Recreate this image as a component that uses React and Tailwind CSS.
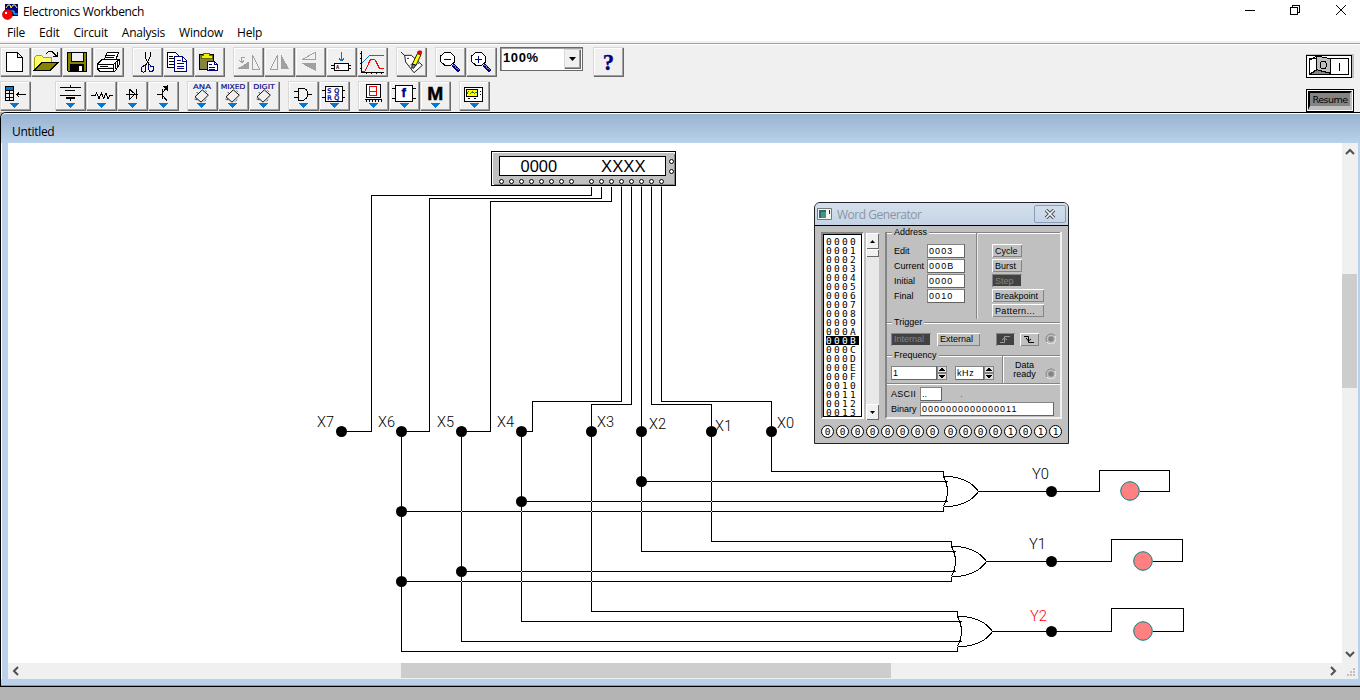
import React from "react";

const UI = "font-['Open_Sans','Noto_Sans',sans-serif]";
const NAVY = "#000084";
const BLUE = "#0078d7";

/* Toolbar button: the drawing grid is three units per pixel. */
function Btn({ x, y, arrow, children }) {
  return (
    <button className="block h-[30px] w-[31px] shrink-0 bg-[#f0f0f0] shadow-[inset_1px_1px_0_#d8d8d8,inset_-1px_-1px_0_#696969,inset_-2px_-2px_0_#a0a0a0,inset_2px_2px_0_#ffffff]">
      <svg width="31" height="30" viewBox={`${x} ${y} 93 90`} shapeRendering="crispEdges" fill="none" stroke="#000" strokeWidth="3">
        {children}
        {arrow && <path d={`M${x + arrow - 14} ${y + 66}h28l-14 15z`} fill={BLUE} stroke="none" />}
      </svg>
    </button>
  );
}

const Group = ({ children }) => <div className="flex">{children}</div>;

function Opamp({ x, label }) {
  const w = label === "ANA" ? 54 : label === "MIXED" ? 74 : 65;
  return (
    <Btn x={x} y={243} arrow={44}>
      <path d={`M${x + 46} 269.500l18 16l-22 21l-18 -16z`} shapeRendering="auto" strokeWidth="2.800" />
      <path d={`M${x + 29} 276l6 6M${x + 23} 297l9 3M${x + 56} 272l4 4M${x + 52} 304l6 -6`} strokeDasharray="3 2" shapeRendering="auto" />
      <text x={x + 18 + (54 - w) / 2} y="266" textLength={w} lengthAdjust="spacingAndGlyphs" fill={NAVY} stroke={NAVY} strokeWidth="0.400" fontFamily="DejaVu Sans" fontSize="20">{label}</text>
    </Btn>
  );
}

function TopRow() {
  return (
    <div className="flex h-[30px]">
      <div className="flex gap-2">
        <Group>
          <Btn x={0} y={141}>
            <path d="M19.500 157.500h33l15 15v42h-48zM52.500 157.500v15h15" fill="#fff" />
          </Btn>
          <Btn x={93} y={141}>
            <path d="M103 208v-36l6-6h15l6 6h24v15h-27z" fill="#ffff63" stroke="none" />
            <path d="M103.500 208v-36l5-5h16l6 6h24v14" stroke="#a5a500" />
            <path d="M103 210l22-22h48l-22 22z" fill="#848400" />
            <path d="M139 160l6-5h11l14 13M172 156v13h-13" />
          </Btn>
          <Btn x={186} y={141}>
            <path d="M202.500 157.500h57v57h-54l-3-4z" fill="#848400" />
            <path d="M213 158h36v27h-36z" fill="#f0f0f0" />
            <path d="M211 194h39v21h-39z" fill="#000" />
            <path d="M238 199h8v13h-8z" fill="#fff" stroke="none" />
          </Btn>
          <Btn x={279} y={141}>
            <path d="M313 180l9-24h34l-9 24z" fill="#fff" />
            <path d="M322 165h24M319 172h24" />
            <path d="M292 193l14-14h52v14l-13 21h-45l-8-8z" fill="#fff" />
            <path d="M292 193h48l18-14M340 193v21M346 187v21M352 183v18M292 206h48M300 200h24" />
            <path d="M325 201h10" stroke="#e7e700" />
          </Btn>
        </Group>
        <Group>
          <Btn x={396} y={141}>
            <path d="M435 157v14l13 24M450 157v14l-12 24" />
            <path d="M438 192l-7 6-6 3v13l6 3 6-4v-21M447 192l5 6h6l3 5v6l-5 5h-6l-4-5v-13" stroke={NAVY} />
          </Btn>
          <Btn x={489} y={141}>
            <path d="M502.500 157.500h24l9 9v36h-33z" fill="#fff" />
            <path d="M508 168h12M508 176h15M508 184h15M508 192h15" />
            <path d="M523.500 169.500h24l13 13v32h-37z" fill="#fff" stroke={NAVY} />
            <path d="M547 170v13h13M530 181h12M530 190h23M530 198h23M530 206h23" stroke={NAVY} />
          </Btn>
          <Btn x={582} y={141}>
            <path d="M598.500 163.500h42v45h-42z" fill="#848442" />
            <path d="M604 175v-8h7v-7h18v7h7v8z" fill="#f0f000" stroke="#636300" />
            <path d="M621.500 184.500h22l9 9v19h-31z" fill="#fff" stroke={NAVY} />
            <path d="M643 184v9h9M627 194h9M627 201h19M627 207h19" stroke={NAVY} />
          </Btn>
        </Group>
        <Group>
          <Btn x={699} y={141}>
            <path d="M709 208h39v-24z" fill="#a0a0a0" stroke="none" />
            <path d="M757 165v42h22zM735 172h-10v13M719 181l6 7 7-7" stroke="#a0a0a0" />
          </Btn>
          <Btn x={792} y={141}>
            <path d="M832 165v42h-21z" stroke="#a0a0a0" />
            <path d="M844 163v45h23z" fill="#a0a0a0" stroke="none" />
          </Btn>
          <Btn x={885} y={141}>
            <path d="M946 157v21h-39z" stroke="#a0a0a0" />
            <path d="M904 190h45v24z" fill="#a0a0a0" stroke="none" />
          </Btn>
          <Btn x={18} y={141}>
            <path d="M64.500 156v26M57 176l7 7 8-7" stroke={BLUE} />
            <path d="M42.500 190.500h42v22h-42z" fill="#fff" />
            <path d="M33 197h9M33 206h9M85 197h9M85 206h9" />
            <text x="48" y="207" fill="#000" stroke="none" fontFamily="Liberation Mono" fontSize="16" fontWeight="bold">A</text>
          </Btn>
          <Btn x={111} y={141}>
            <path d="M124.500 153v63h68M124 160h-5M124 175h-5M124 190h-5M124 204h-5M138 217v5M153 217v5M168 217v5M183 217v5" />
            <path d="M127 188l22-22h43" stroke={BLUE} />
            <path d="M127 214h8l17-37h12l15 29h14" stroke="#f00" />
          </Btn>
        </Group>
        <Group>
          <Btn x={228} y={141}>
            <g shapeRendering="auto" strokeWidth="2.600">
              <path d="M243 156l12 12" />
              <path d="M254 166h20l33 30-25 22-25-32z" fill="#fff" />
              <path d="M269 197l24-18M274 205l25-17" strokeDasharray="3 3" />
              <path d="M261 175h6" />
              <path d="M277 192l15-31 11 3-15 32z" fill="#ff0" />
              <path d="M292 159l3-6h9v8l-2 3z" fill="#f00" stroke="#a00000" />
              <path d="M275 203l2-11 10 4-6 9z" fill="#848484" />
            </g>
          </Btn>
        </Group>
        <Group>
          <Btn x={345} y={141}>
            <path d="M376 156h14l13 13v18l-13 10h-14l-14-12v-17z" fill="#fff" />
            <path d="M373 178.500h21" stroke={NAVY} />
            <path d="M398 194l20 20" stroke={NAVY} strokeWidth="9" />
            <path d="M401 196l16 16" stroke="#848484" strokeDasharray="3 3" />
          </Btn>
          <Btn x={438} y={141}>
            <path d="M469 156h14l13 13v18l-13 10h-14l-14-12v-17z" fill="#fff" />
            <path d="M466 178.500h21M476.500 168v21" stroke={NAVY} />
            <path d="M491 194l20 20" stroke={NAVY} strokeWidth="9" />
            <path d="M494 196l16 16" stroke="#848484" strokeDasharray="3 3" />
          </Btn>
        </Group>
      </div>
      <div className="ml-[3px] flex h-6 w-[83px] items-start justify-between border border-[#696969] bg-white pl-0.5 shadow-[inset_1px_1px_0_#a0a0a0]">
        <span className="mt-[2px] text-[13px] leading-[16px] font-bold tracking-[0.600px] font-['Liberation_Sans',sans-serif]">100%</span>
        <span className="mt-px mr-px flex h-5 w-[17px] items-center justify-center bg-[#f0f0f0] shadow-[inset_1px_1px_0_#d8d8d8,inset_-1px_-1px_0_#696969,inset_-2px_-2px_0_#a0a0a0]">
          <svg width="7" height="4" viewBox="0 0 7 4"><path d="M0 0h7L3.500 4z" /></svg>
        </span>
      </div>
      <div className="ml-[10px]">
        <Btn x={819} y={141}>
          <text x="865" y="209" textAnchor="middle" fill={NAVY} stroke={NAVY} strokeWidth="1" fontFamily="Liberation Serif" fontWeight="bold" fontSize="68">?</text>
        </Btn>
      </div>
    </div>
  );
}

function BottomRow() {
  return (
    <div className="flex h-[30px] gap-2">
      <div className="mr-4">
        <Btn x={0} y={243} arrow={43}>
          <path d="M16 259h25v13h-25z" fill={BLUE} stroke="none" />
          <path d="M16.500 259.500h24v42h-24zM16 271.500h24M16 281.500h24M16 291.500h24M28.500 271v30M49 284.500h29M58 277l-8 7.500 8 7.500" />
        </Btn>
      </div>
      <Group>
        <Btn x={165} y={243} arrow={46}>
          <path d="M180 261.500h63M180 285.500h63M211.500 254v8M211.500 294v9" />
          <path d="M196 270.500h30M197 294h27" strokeWidth="4" />
        </Btn>
        <Btn x={258} y={243} arrow={46}>
          <path d="M273 286.500h13l4-8 7 17 7-17 7 17 7-17 6 17 5-9h10" />
        </Btn>
        <Btn x={351} y={243} arrow={46}>
          <path d="M378 282.500h36M387.500 267v31l18-15.500zM408.500 267v31" />
        </Btn>
        <Btn x={444} y={243} arrow={46}>
          <path d="M472 282.500h14M486.500 268v28M487 278l15-17v-6M487 286l14 16" />
          <path d="M488 259h15v15z" fill="#000" stroke="none" />
        </Btn>
      </Group>
      <Group>
        <Opamp x={561} label="ANA" />
        <Opamp x={654} label="MIXED" />
        <Opamp x={747} label="DIGIT" />
      </Group>
      <Group>
        <Btn x={864} y={243} arrow={46}>
          <path d="M882 273.500h14M882 291.500h14M922 282.500h14M895.500 264.500h15l8 5 4 7v12l-4 7-8 5h-15z" />
        </Btn>
        <Btn x={-3} y={243} arrow={46}>
          <path d="M15.500 258.500h52v47h-52z" fill="#fff" />
          <path d="M6 270.500h9M6 291.500h9M67 270.500h9M67 291.500h9" />
          <path d="M46 284.500h11" stroke={NAVY} strokeWidth="2" />
          <g fill={NAVY} stroke={NAVY} strokeWidth="1" fontFamily="DejaVu Sans" fontSize="19">
            <text x="22" y="278">S</text><text x="43" y="278">Q</text>
            <text x="22" y="300">R</text><text x="43" y="300">Q</text>
          </g>
        </Btn>
      </Group>
      <Group>
        <Btn x={114} y={243} arrow={46}>
          <path d="M138.500 253.500h43v38h-43z" fill="#fff" />
          <path d="M135 297.500h51M138.500 298v7M147.500 298v7M156.500 298v7M165.500 298v7M174.500 298v7M183.500 298v7" />
          <path d="M148.500 259.500h21v27h-21zM148 273.500h21" stroke="#f00" />
        </Btn>
        <Btn x={207} y={243} arrow={46}>
          <path d="M226.500 255.500h51v48h-51z" fill="#fff" />
          <path d="M217 264.500h9M217 294.500h9M278 264.500h9M278 294.500h9" />
          <text x="251" y="292" textAnchor="middle" fill={NAVY} stroke={NAVY} strokeWidth="1" fontFamily="Liberation Sans" fontWeight="bold" fontSize="40">f</text>
        </Btn>
        <Btn x={300} y={243} arrow={46}>
          <text x="346" y="299" textAnchor="middle" textLength="48" lengthAdjust="spacingAndGlyphs" fill="#000" strokeWidth="1.500" fontFamily="Liberation Sans" fontWeight="bold" fontSize="57">M</text>
        </Btn>
      </Group>
      <Btn x={417} y={243} arrow={46}>
        <path d="M433.500 261.500h54v42h-54z" fill="#fff" />
        <path d="M438.500 267.500h35v21h-35z" fill="#ff0" />
        <path d="M441 280l5-5 6 6 6-6 6 6 6-6" stroke="#008484" strokeDasharray="4 2" />
        <path d="M444 295.500h6M462 295.500h6M480.500 274v3M480.500 282v3" strokeWidth="4" />
      </Btn>
    </div>
  );
}

const WIRES = [
  "M591 186V195H371V431H341", "M601 186V198H429V431H401", "M611 186V201H490V431H461",
  "M621 186V401H532V431H521", "M631 186V404H591V611H957V616", "M641 186V551H955",
  "M651 186V404H711V541H951V546", "M661 186V401H771V471H943V476",
  "M401 431V651H957V646", "M461 431V641H961", "M521 431V621H961",
  "M641 481H947", "M521 501H947", "M401 511H943V506", "M461 571H955", "M401 581H951V576",
  "M978 491H1099V470H1169V491H1139", "M986 561H1111V539H1182V561H1152", "M992 631H1111V608H1183V631H1152",
];
const NODES = [[341, 431], [401, 431], [461, 431], [521, 431], [591, 431], [641, 431], [711, 431], [771, 431], [641, 481], [521, 501], [401, 511], [461, 571], [401, 581], [1051, 491], [1051, 561], [1051, 631]];
const HOPS = [[711, 481], [591, 501], [641, 501], [711, 501], [461, 511], [521, 511], [591, 511], [641, 511], [711, 511], [521, 571], [591, 571], [461, 581], [521, 581], [591, 581]];
const LABELS = [["X7", 317, 427], ["X6", 378, 427], ["X5", 437, 427], ["X4", 497, 427], ["X3", 597, 427], ["X2", 649, 429], ["X1", 715, 431], ["X0", 777, 428], ["Y0", 1032, 479], ["Y1", 1029, 549], ["Y2", 1030, 621]];
const PORTS = [501, 511, 521, 531, 541, 551, 561, 571, 591, 601, 611, 621, 631, 641, 651, 661];

function Circuit() {
  return (
    <svg className="block" width="1334" height="520" viewBox="8 143 1334 520">
      <g shapeRendering="crispEdges">
        <rect x="491" y="151" width="185" height="35" fill="#000" />
        <rect x="492" y="152" width="183" height="33" fill="#fff" />
        <rect x="494" y="154" width="181" height="31" fill="#848484" />
        <rect x="493" y="153" width="181" height="31" fill="#c0c0c0" />
        <rect x="499.500" y="156.500" width="166" height="19" fill="#fff" stroke="#000" />
      </g>
      <g fontFamily="Liberation Sans" fontSize="16">
        <text x="520.500" y="172" textLength="36.500" lengthAdjust="spacingAndGlyphs">0000</text>
        <text x="601" y="172" textLength="44.500" lengthAdjust="spacingAndGlyphs">XXXX</text>
      </g>
      <g transform="translate(.5 .5)" stroke="#000" fill="none">
        {WIRES.map((d) => <path key={d} d={d} shapeRendering="crispEdges" />)}
        {[[0, 0], [8, 70], [14, 140]].map(([x, y]) => (
          <path key={x} transform={`translate(${x} ${y})`} d="M943 476q8 15 0 30M943 476h6q20 2 29 15q-9 13-29 15h-6" shapeRendering="crispEdges" />
        ))}
        {HOPS.map(([x, y]) => <rect key={`${x}-${y}`} x={x - 0.5} y={y - 0.5} width="1" height="1" fill="#ddd" stroke="none" />)}
        <g fill="#fff">
          {PORTS.map((x) => <circle key={x} cx={x} cy="181" r="2" />)}
          <circle cx="671" cy="161" r="2" /><circle cx="671" cy="171" r="2" />
        </g>
        <path d="M621 183v4M631 183v4M641 183v4M651 183v4M661 183v4" stroke="#888" strokeDasharray="1 1" shapeRendering="crispEdges" />
        <g fill="#000" stroke="none">{NODES.map(([x, y]) => <circle key={`${x}-${y}`} cx={x} cy={y} r="5.500" />)}</g>
        <g fill="#ff8080" stroke="#008080"><circle cx="1129.500" cy="490.500" r="9.300" /><circle cx="1142.500" cy="560.500" r="9.300" /><circle cx="1142.500" cy="630.500" r="9.300" /></g>
      </g>
      <g fontFamily="Roboto" fontWeight="300" fontSize="15.500">
        {LABELS.map(([t, x, y]) => <text key={t} x={x} y={y} textLength="17" lengthAdjust="spacingAndGlyphs" fill={t === "Y2" ? "#f00" : "#000"}>{t}</text>)}
      </g>
    </svg>
  );
}

const Legend = ({ children }) => (
  <div className="-mt-px flex h-[9px] items-center">
    <span className="h-0.5 w-[5px] border-t border-b border-t-[#848484] border-b-white" />
    <span className="px-[2px] leading-[9px]">{children}</span>
    <span className="h-0.5 flex-1 border-t border-b border-t-[#848484] border-b-white" />
  </div>
);
const Key = ({ className, on, children }) => (
  <div className={`flex h-[13px] items-center pl-[3px] whitespace-nowrap ${on ? "bg-[#424242] text-[#848484] shadow-[inset_1px_1px_0_#848484,inset_-1px_-1px_0_#c0c0c0]" : "bg-[#c0c0c0] shadow-[inset_1px_1px_0_#fff,inset_-1px_-1px_0_#848484]"} ${className}`}>{children}</div>
);
const Box = ({ className, children }) => (
  <div className={`flex h-[14px] items-center border border-t-[#848484] border-l-[#848484] border-r-[#636363] border-b-[#636363] bg-white pl-px whitespace-nowrap ${className}`}>{children}</div>
);
const Spin = () => (
  <svg width="10" height="14" viewBox="0 0 10 14" shapeRendering="crispEdges">
    <path d="M0 0h10v14H0z" fill="#848484" /><path d="M1 1h8v5H1zM1 8h8v5H1z" fill="#e0e0e0" />
    <path d="M2 5h6L5 1.500zM2 9h6L5 12.500z" />
  </svg>
);
const Led = () => (
  <svg width="12" height="12" viewBox="0 0 12 12"><circle cx="6" cy="6" r="5" fill="#c0c0c0" stroke="#848484" /><path d="M2 9a5 5 0 0 0 8-6" fill="none" stroke="#fff" /><circle cx="6" cy="6" r="2.800" fill="#848484" /></svg>
);
const ScrollKey = ({ up }) => (
  <span className="flex h-4 w-[13px] items-center justify-center bg-[#f0f0f0] shadow-[inset_1px_1px_0_#fff,inset_-1px_-1px_0_#696969]">
    <svg width="5" height="3" viewBox="0 0 5 3"><path d={up ? "M0 3h5L2.500 0z" : "M0 0h5L2.500 3z"} /></svg>
  </span>
);

const WORDS = ["0000", "0001", "0002", "0003", "0004", "0005", "0006", "0007", "0008", "0009", "000A", "000B", "000C", "000D", "000E", "000F", "0010", "0011", "0012", "0013"];
const FIELDS = [["Edit", "0003"], ["Current", "000B"], ["Initial", "0000"], ["Final", "0010"]];
const MONO = "font-['DejaVu_Sans_Mono',monospace]";

function Bits({ bits }) {
  return (
    <div className="flex gap-[2px]">
      {bits.split("").map((b, i) => (
        <span key={i} className={`flex size-[13px] items-center justify-center rounded-full border border-black bg-white text-[9.500px] leading-none ${MONO}`}>{b}</span>
      ))}
    </div>
  );
}

function WordGenerator() {
  return (
    <div className="absolute top-[59px] left-[806px] flex h-[242px] w-[255px] flex-col overflow-hidden rounded-t-[6px] border border-[#202428] bg-[#c0c0c0] text-[9px] leading-[10px] font-['Liberation_Sans',sans-serif]">
      <div className="flex h-[23px] shrink-0 items-center border-b border-black bg-gradient-to-b from-[#d4dfec] to-[#c4d4e6] pl-[2px]">
        <svg width="15" height="12" viewBox="0 0 15 12"><path d="M.5.500h14v11H.5z" fill="#f4f4f4" stroke="#777" /><path d="M2 2h7v8H2z" fill="#286878" /><path d="M4 4h5v6H4z" fill="#409878" /><path d="M12 2h1v4h-1z" fill="#226" /></svg>
        <span className={`mt-0.5 ml-[5px] flex-1 text-[12px] leading-4 tracking-[-0.480px] text-[#8c959f] ${UI}`}>Word Generator</span>
        <span className="mr-[2px] flex h-[18px] w-[32px] items-center justify-center rounded-[2px] border border-[#8b9bb5]">
          <svg width="12" height="10" viewBox="0 0 12 10"><path d="M2 1l8 8M10 1L2 9" stroke="#4a5260" strokeWidth="3.600" /><path d="M2 1l8 8M10 1L2 9" stroke="#f4f4f4" strokeWidth="1.600" /></svg>
        </span>
      </div>
      <div className="flex pt-[6px] pl-[6px]">
        <div className="h-[187px] w-[43px] border-2 border-t-[#848484] border-l-[#848484] border-r-white border-b-white">
          <div className="h-full border border-black bg-white pt-0.5">
            {WORDS.map((w) => (
              <div key={w} className={`ml-0.5 h-[9px] w-[33px] text-[9.500px] leading-[9px] tracking-[2.280px] whitespace-nowrap ${MONO} ${w === "000B" ? "bg-black text-white" : ""}`}>{w}</div>
            ))}
          </div>
        </div>
        <div className="mt-px ml-[2px] flex h-[187px] w-[13px] flex-col justify-between bg-[#e8e8e8]">
          <div><ScrollKey up /><div className="h-2 bg-[#f0f0f0] shadow-[inset_1px_1px_0_#fff,inset_-1px_-1px_0_#696969]" /></div>
          <ScrollKey />
        </div>
        <div className="ml-[6px] flex h-[187px] w-[177px] flex-col border-r-2 border-b-2 border-l-2 border-l-[#848484] border-r-[#f0f0f0] border-b-[#f0f0f0]">
          <div className="-mt-[3px]"><Legend>Address</Legend></div>
          <div className="flex h-[82px]">
            <div className="-mt-1 w-[90px] border-r border-r-[#848484] pt-[11px] pl-[7px] shadow-[1px_0_0_#e8e8e8]">
              {FIELDS.map(([l, v]) => (
                <div key={l} className="mb-px flex items-center"><span className="w-[33px] whitespace-nowrap">{l}</span><Box className="w-[38px] tracking-[1.100px]">{v}</Box></div>
              ))}
            </div>
            <div className="flex flex-col gap-0.5 pt-[7px] pl-[15px]">
              <Key className="w-[30px]">Cycle</Key><Key className="w-[30px]">Burst</Key><Key on className="w-[30px]">Step</Key><Key className="w-[52px]">Breakpoint</Key><Key className="w-[52px] tracking-[0.350px]">Pattern...</Key>
            </div>
          </div>
          <Legend>Trigger</Legend>
          <div className="flex h-[25px] items-center pb-px pl-1">
            <Key on className="w-10">Internal</Key>
            <Key className="ml-1.5 w-[43px]">External</Key>
            <Key on className="ml-4 w-[19px]"><svg width="12" height="9" viewBox="0 0 12 9" fill="none" stroke="#999"><path d="M1 7.500h4.500v-6H11M3 5l2.500-2L8 5" /></svg></Key>
            <Key className="ml-[5px] w-[19px]"><svg width="12" height="9" viewBox="0 0 12 9" fill="none" stroke="#000"><path d="M1 1.500h4.500v6H11M3 3l2.500 3L8 4" /></svg></Key>
            <span className="ml-1.5"><Led /></span>
          </div>
          <Legend>Frequency</Legend>
          <div className="flex h-6">
            <div className="flex w-[116px] items-center pt-px pl-1">
              <Box className="w-[46px]">1</Box><Spin />
              <Box className="ml-2 w-[29px] tracking-[0.600px]">kHz</Box><Spin />
            </div>
            <div className="-mt-1 flex flex-1 items-center border-l border-l-white shadow-[-1px_0_0_#848484]">
              <span className="w-[41px] text-center leading-[9px]">Data<br />ready</span><span className="mt-[7px]"><Led /></span>
            </div>
          </div>
          <div className="-mt-px flex flex-1 flex-col border-t border-t-[#848484] pt-[3px] pl-1 shadow-[inset_0_1px_0_#fff]">
            <div className="flex items-center"><span className="w-[29px] tracking-[0.300px]">ASCII</span><Box className="w-[22px]">..</Box><span className="ml-[18px] text-[#008484]">.</span></div>
            <div className="mt-px flex items-center"><span className="w-[29px]">Binary</span><Box className="w-[134px] tracking-[1px]">0000000000000011</Box></div>
          </div>
        </div>
      </div>
      <div className="flex gap-[5px] pt-[5px] pl-[6px]"><Bits bits="00000000" /><Bits bits="00001011" /></div>
    </div>
  );
}

const Chevron = ({ d }) => <svg className="block" width="16" height="16" viewBox="0 0 16 16" fill="none" stroke="#505050" strokeWidth="2"><path d={d} /></svg>;

export default function App() {
  return (
    <div className={`flex h-[700px] w-[1360px] flex-col overflow-hidden bg-[#b4b4b4] text-[12px] text-black ${UI}`}>
      <header className="flex h-[22px] shrink-0 items-center bg-white">
        <svg className="ml-0.5" width="17" height="17" viewBox="0 0 17 17">
          <path d="M3 1h13v12H3z" fill="#000084" /><path d="M4 5l2-3h2l1 3 2-3h2l2 3" fill="none" stroke="#ff0" /><path d="M8 11V8h4v3h4" fill="none" stroke="#0ff" />
          <circle cx="5.500" cy="11.500" r="5" fill="#f00" stroke="#900" strokeWidth=".6" /><path d="M3 9h2v2H3z" fill="#fff" />
        </svg>
        <h1 className="ml-1 flex-1 pt-0.5 tracking-[-0.310px] whitespace-nowrap">Electronics Workbench</h1>
        <svg width="110" height="22" viewBox="1245 0 110 22" fill="none" stroke="#000" shapeRendering="crispEdges">
          <path d="M1245 10.500h10M1290.500 7.500h7v7h-7zM1292.500 7v-2h7v7h-2" /><path d="M1336 5l10 10M1346 5l-10 10" shapeRendering="auto" />
        </svg>
        <span className="w-[5px]" />
      </header>
      <nav className="flex h-[19px] shrink-0 items-center gap-[14px] bg-white pt-0.5 pl-[7px] tracking-[-0.230px] whitespace-nowrap">
        <span>File</span><span>Edit</span><span>Circuit</span><span>Analysis</span><span>Window</span><span>Help</span>
      </nav>
      <div className="h-1 shrink-0 border-b border-white bg-[#f0f0f0] pt-0.5"><div className="h-px bg-[#a0a0a0]" /></div>
      <div className="flex h-[67px] shrink-0 justify-between bg-[#f0f0f0] pt-0.5">
        <div className="flex flex-col gap-1"><TopRow /><BottomRow /></div>
        <div className="mr-1.5 flex w-12 flex-col pt-[7px]">
          <svg width="48" height="24" viewBox="0 0 144 72" shapeRendering="crispEdges" stroke="#000" strokeWidth="3">
            <path d="M0 0h144v72H0z" fill="#c0c0c0" stroke="none" />
            <path d="M1.500 4.500h135v66H1.500z" fill="#fff" /><path d="M9.500 12.500h119v49h-119z" fill="#fff" />
            <path d="M32 6l40 8v42l-40-6z" fill="#c0c0c0" /><path d="M12 60l20-13 40 11v4z" fill="#848484" /><path d="M9 20l22-14v43L10 61" fill="none" />
            <ellipse cx="52" cy="33" rx="10" ry="12" fill="none" /><path d="M73.500 12v49M100.500 27v24" />
          </svg>
          <div className="mt-[11px] flex h-[23px] items-stretch border border-black bg-white p-px">
            <div className="flex flex-1 items-center justify-center border-t-2 border-r-2 border-b-4 border-l-2 border-t-black border-r-[#c0c0c0] border-b-[#c0c0c0] border-l-black bg-[#848484] text-[9.500px] leading-none tracking-[-0.500px] font-['DejaVu_Sans',sans-serif]">Resume</div>
          </div>
        </div>
      </div>
      <main className="flex h-[575px] shrink-0 flex-col rounded-tl-[6px] border-t border-b border-l border-black bg-[#b9d1ea]">
        <div className="flex h-[30px] shrink-0 items-center rounded-tl-[5px] border-t border-t-white bg-gradient-to-b from-[#99b4d1] to-[#b9d1ea] pt-[7px] pl-[11px] tracking-[-0.300px]">Untitled</div>
        <div className="flex h-[536px] shrink-0 border-l border-l-white pr-0.5 pl-[6px]">
          <div className="relative w-[1334px] bg-white">
            <Circuit />
            <WordGenerator />
            <div className="flex h-4 items-center bg-[#f0f0f0]">
              <Chevron d="M10 4L6 8l4 4" />
              <div className="-mt-px ml-[377px] h-[15px] w-[490px] bg-[#cdcdcd]" />
              <span className="ml-auto h-4"><Chevron d="M5 4l4 4-4 4" /></span>
            </div>
          </div>
          <div className="flex w-4 flex-col bg-[#f0f0f0]">
            <Chevron d="M4 11l4-4 4 4" />
            <div className="mt-[115px] h-[114px] w-[15px] bg-[#cdcdcd]" />
            <span className="mt-auto"><Chevron d="M4 5l4 4 4-4" /></span>
            <svg width="16" height="16" viewBox="0 0 16 16" fill="#bfbfbf"><path d="M11 5h2v2h-2zM8 8h2v2H8zM11 8h2v2h-2zM5 11h2v2H5zM8 11h2v2H8zM11 11h2v2h-2z" /></svg>
          </div>
        </div>
        <div className="mt-auto h-px bg-[#3fb4cf]" />
      </main>
    </div>
  );
}
